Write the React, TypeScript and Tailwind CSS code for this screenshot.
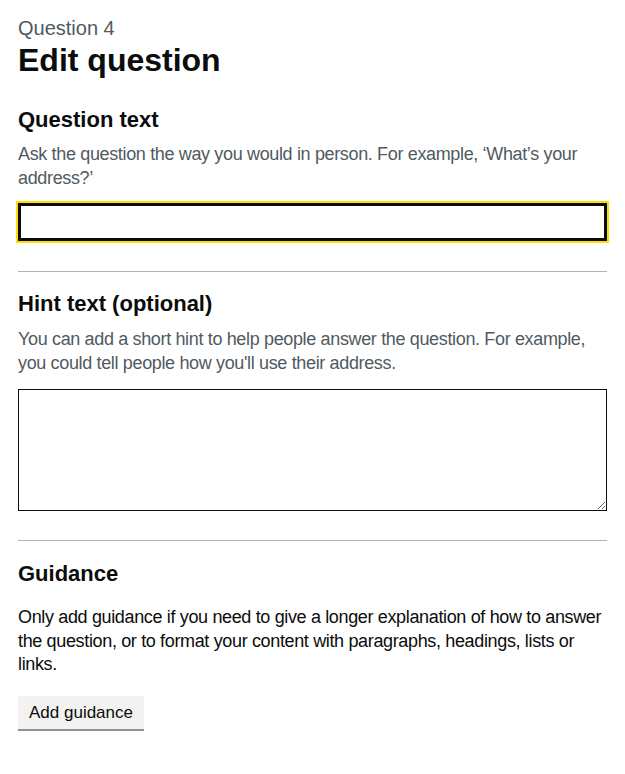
import React from 'react';

const font = { fontFamily: '"Liberation Sans", Arial, sans-serif' };

const Divider = () => <hr className="border-0 border-t border-[#b1b4b6] m-0" />;

export default function App() {
  return (
    <div className="bg-white min-h-[774px] px-[18px] pt-[16px] text-[#0b0c0c]" style={font}>
      {/* Page heading */}
      <span className="block text-[20px] leading-[25px] text-[#505a5f]">Question 4</span>
      <h1 className="mt-[1px] text-[32px] leading-[36px] font-bold">Edit question</h1>

      {/* Question text */}
      <div className="mt-[28px]">
        <label htmlFor="question-text" className="block text-[22px] leading-[28px] font-bold">
          Question text
        </label>
        <p className="mt-[9px] text-[18px] leading-[23.5px] tracking-[-0.35px] text-[#505a5f]">
          Ask the question the way you would in person. For example, ‘What’s your address?’
        </p>
        <input
          id="question-text"
          type="text"
          className="mt-[13px] block w-full h-[38px] border-[3px] border-[#0b0c0c] outline-2 outline-[#ffdd00] bg-white px-1"
        />
      </div>

      <div className="mt-[30px]">
        <Divider />
      </div>

      {/* Hint text */}
      <div className="mt-[18px]">
        <label htmlFor="hint-text" className="block text-[22px] leading-[28px] font-bold">
          Hint text (optional)
        </label>
        <p className="mt-[10px] text-[18px] leading-[23.5px] tracking-[-0.35px] text-[#505a5f]">
          You can add a short hint to help people answer the question. For example, you could tell people how you'll use their address.
        </p>
        <textarea
          id="hint-text"
          rows={5}
          className="mt-[14px] block w-full h-[122px] border border-[#0b0c0c] bg-white p-1"
        />
      </div>

      <div className="mt-[29px]">
        <Divider />
      </div>

      {/* Guidance */}
      <div className="mt-[19px]">
        <h2 className="text-[22px] leading-[28px] font-bold">Guidance</h2>
        <p className="mt-[18px] text-[18px] leading-[23.5px] tracking-[-0.35px]">
          Only add guidance if you need to give a longer explanation of how to answer the question, or to format your content with paragraphs, headings, lists or links.
        </p>
        <button
          type="button"
          className="mt-[19px] bg-[#f3f2f1] shadow-[0_2px_0_#929191] px-[11px] h-[33px] text-[17px] leading-[33px] text-[#0b0c0c]"
        >
          Add guidance
        </button>
      </div>
    </div>
  );
}
